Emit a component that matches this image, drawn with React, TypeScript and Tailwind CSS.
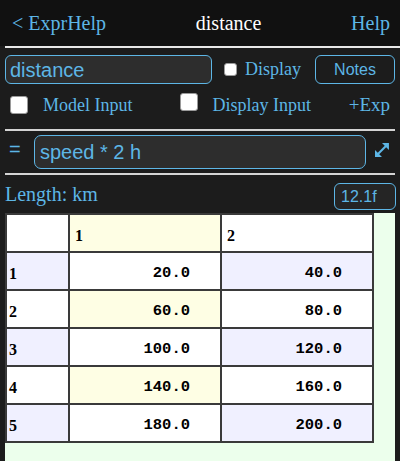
import React from "react";

const blue = "text-[#5db6e6]";

function Box({ size }: { size: number }) {
  return (
    <span
      className="inline-block bg-white rounded-[3px] border border-[#9a9a9a] shrink-0"
      style={{ width: size, height: size }}
    />
  );
}

const rows = [
  ["1", "20.0", "40.0"],
  ["2", "60.0", "80.0"],
  ["3", "100.0", "120.0"],
  ["4", "140.0", "160.0"],
  ["5", "180.0", "200.0"],
];

export default function App() {
  return (
    <div className="w-[400px] h-[461px] bg-[#1c1c1c] overflow-hidden flex flex-col font-['Liberation_Serif',serif]">
      {/* header */}
      <div className="h-[46px] bg-[#111111] flex items-center justify-between pl-[12px] pr-[10px] text-[20px]">
        <span className={blue}>&lt; ExprHelp</span>
        <span className="text-white">distance</span>
        <span className={blue}>Help</span>
      </div>
      <div className="h-[2px] bg-[#e8e8e8] ml-[5px]" />

      {/* name row */}
      <div className="flex items-center mt-[7px] h-[29px] px-[5px]">
        <div className="w-[207px] h-[29px] rounded-[6px] border border-[#5db6e6] bg-[#2d2d2d] flex items-center pl-[4px] font-['Liberation_Sans',sans-serif] text-[20px] text-[#5db6e6]">
          distance
        </div>
        <div className="ml-[12px] flex items-center">
          <Box size={13} />
          <span className={`ml-[8px] text-[18px] ${blue}`}>Display</span>
        </div>
        <div className="ml-auto w-[80px] h-[29px] rounded-[6px] border border-[#5db6e6] flex items-center justify-center font-['Liberation_Sans',sans-serif] text-[16px] text-[#5db6e6]">
          Notes
        </div>
      </div>

      {/* options row */}
      <div className="flex items-center h-[20px] mt-[11px] pl-[10px] pr-[10px]">
        <Box size={18} />
        <span className={`ml-[15px] text-[18px] ${blue}`}>Model Input</span>
        <div className="ml-[47px]">
          <Box size={18} />
        </div>
        <span className={`ml-[15px] text-[18px] ${blue}`}>Display Input</span>
        <span className={`ml-auto text-[19px] ${blue}`}>+Exp</span>
      </div>

      <div className="h-[2px] bg-[#d4d4d4] mx-[5px] mt-[14px]" />

      {/* formula row */}
      <div className="flex items-center h-[34px] mt-[4px] pl-[9px] pr-[10px]">
        <span className="w-[25px] font-['Liberation_Sans',sans-serif] text-[20px] text-[#5db6e6] leading-none -mt-[6px]">=</span>
        <div className="w-[333px] h-[34px] rounded-[7px] border border-[#5db6e6] bg-[#2d2d2d] flex items-center pl-[5px] font-['Liberation_Sans',sans-serif] text-[20px] text-[#5db6e6]">
          speed * 2 h
        </div>
        <svg className="ml-[8px] -mt-[4px]" width="16" height="16" viewBox="0 0 16 16">
          <line x1="4" y1="12" x2="12" y2="4" stroke="#5db6e6" strokeWidth="2" />
          <polygon points="15,1 15,8 8,1" fill="#5db6e6" />
          <polygon points="1,15 1,8 8,15" fill="#5db6e6" />
        </svg>
      </div>

      <div className="h-[2px] bg-[#d4d4d4] mx-[5px] mt-[4px]" />

      {/* length row */}
      <div className="flex items-center h-[27px] mt-[8px] pl-[5px] pr-[4px]">
        <span className={`text-[20px] ${blue} -mt-[6px]`}>Length: km</span>
        <div className="ml-auto w-[62px] h-[27px] rounded-[6px] border border-[#5db6e6] bg-[#252525] flex items-center pl-[6px] font-['Liberation_Sans',sans-serif] text-[16px] text-[#5db6e6]">
          12.1f
        </div>
      </div>

      {/* table */}
      <div className="mx-[5px] mt-[3px] flex-1 bg-[#ecffec]">
        <table className="border-collapse w-[367px] table-fixed">
          <colgroup>
            <col className="w-[63px]" />
            <col className="w-[152px]" />
            <col className="w-[152px]" />
          </colgroup>
          <tbody>
            <tr className="h-[38px]">
              <td className="border-2 border-[#3a3a3a] bg-white" />
              <td className="border-2 border-[#3a3a3a] bg-[#fefee4] align-bottom pl-[5px] pb-[3px] font-bold text-[16px] text-black">1</td>
              <td className="border-2 border-[#3a3a3a] bg-white align-bottom pl-[5px] pb-[3px] font-bold text-[16px] text-black">2</td>
            </tr>
            {rows.map((r, i) => {
              const odd = i % 2 === 0;
              return (
                <tr key={r[0]} className="h-[38px]">
                  <td className={`border-2 border-[#3a3a3a] ${odd ? "bg-[#f0f0ff]" : "bg-white"} align-bottom pl-[2px] pb-[3px] font-bold text-[16px] text-black`}>
                    {r[0]}
                  </td>
                  <td className={`border-2 border-[#3a3a3a] ${odd ? "bg-white" : "bg-[#fefee4]"} align-bottom text-right pr-[30px] pb-[4px] font-['Liberation_Mono',monospace] font-bold text-[15.5px] text-black`}>
                    {r[1]}
                  </td>
                  <td className={`border-2 border-[#3a3a3a] ${odd ? "bg-[#f0f0ff]" : "bg-white"} align-bottom text-right pr-[30px] pb-[4px] font-['Liberation_Mono',monospace] font-bold text-[15.5px] text-black`}>
                    {r[2]}
                  </td>
                </tr>
              );
            })}
          </tbody>
        </table>
      </div>
    </div>
  );
}
